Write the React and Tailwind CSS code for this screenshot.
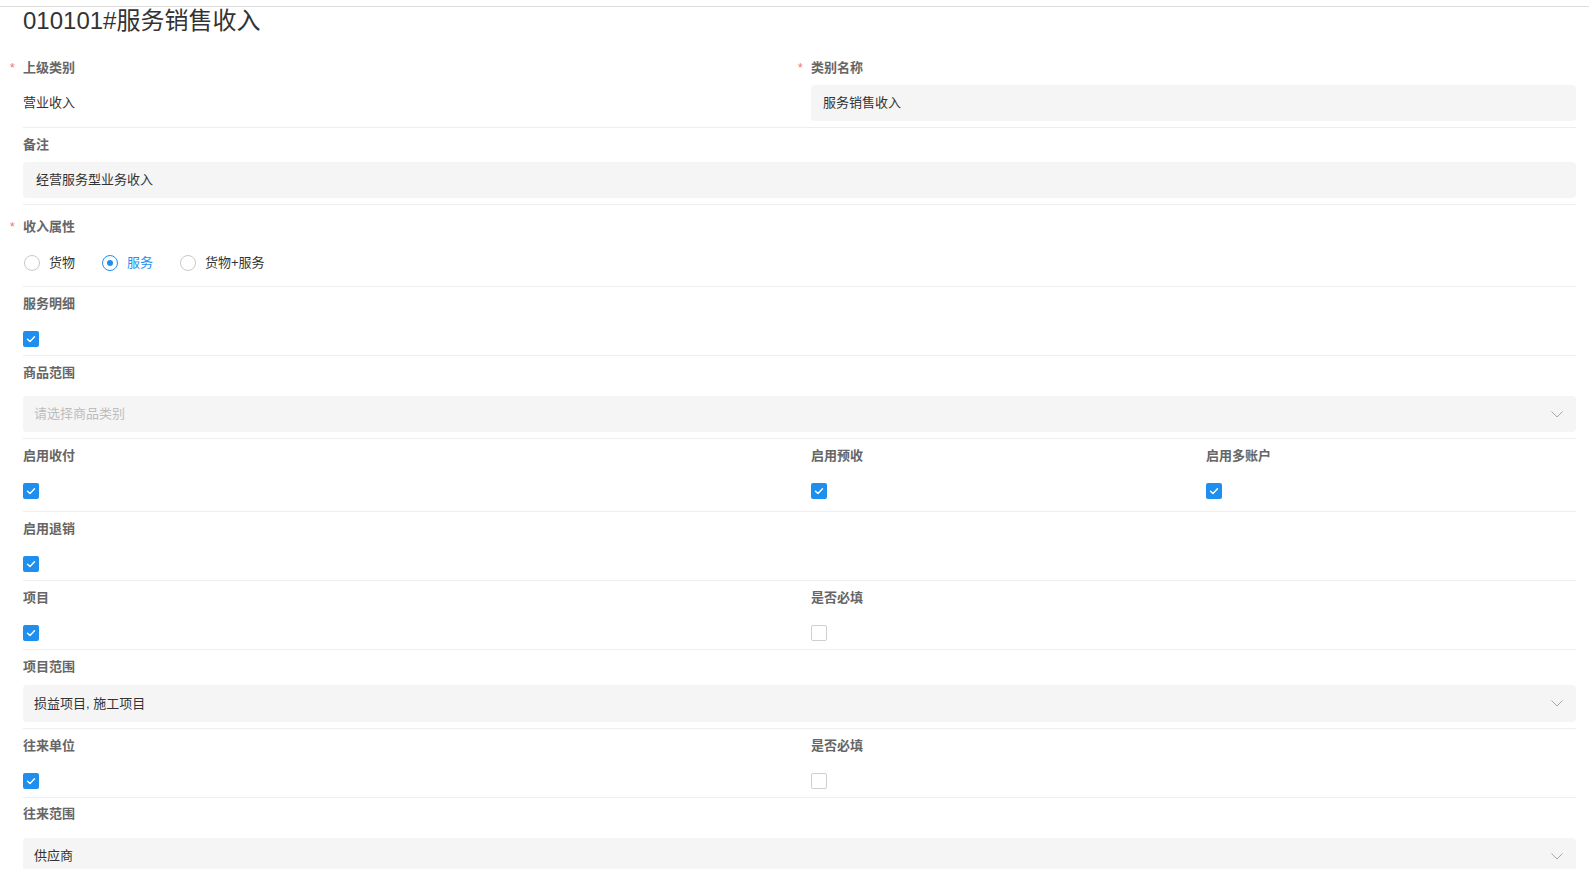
import React from "react";

const BLUE = "bg-[#1e8fef]";

function Label({ text, required }) {
  return (
    <div className="h-[20px] leading-[20px] text-[13px] font-bold text-[#666] whitespace-nowrap">
      {required && (
        <span className="inline-block w-[13px] -ml-[13px] text-[12px] font-normal text-[#f56c6c] align-top">*</span>
      )}
      {text}
    </div>
  );
}

function Check({ checked }) {
  if (checked) {
    return (
      <div className={`w-4 h-4 rounded-[2px] ${BLUE} flex items-center justify-center`}>
        <svg width="12" height="12" viewBox="0 0 12 12" fill="none">
          <polyline points="2.5,6.2 5,8.5 9.5,3.8" stroke="white" strokeWidth="1.4" strokeLinecap="round" strokeLinejoin="round" />
        </svg>
      </div>
    );
  }
  return <div className="w-4 h-4 rounded-[2px] border border-[#cfcfcf] bg-white" />;
}

function CheckField({ label, checked, gap = "mt-[9px]" }) {
  return (
    <div className="flex flex-col">
      <Label text={label} />
      <div className={`${gap} h-[32px] flex items-center`}>
        <Check checked={checked} />
      </div>
    </div>
  );
}

function Chevron() {
  return (
    <svg width="12" height="7" viewBox="0 0 12 7" fill="none">
      <polyline points="0.5,0.5 6,6 11.5,0.5" stroke="#a8a8a8" strokeWidth="1" />
    </svg>
  );
}

function Select({ value, placeholder, h = "h-[36px]" }) {
  return (
    <div className={`${h} rounded-[4px] bg-[#f5f5f5] pl-[11px] pr-[13px] flex items-center justify-between text-[13px]`}>
      {value ? <span className="text-[#333]">{value}</span> : <span className="text-[#bdbdbd]">{placeholder}</span>}
      <Chevron />
    </div>
  );
}

function Radio({ label, checked }) {
  return (
    <div className="flex items-center gap-[9px]">
      {checked ? (
        <div className="w-4 h-4 rounded-full border border-[#1e8fef] flex items-center justify-center">
          <div className="w-[6px] h-[6px] rounded-full bg-[#1e8fef]" />
        </div>
      ) : (
        <div className="w-4 h-4 rounded-full border border-[#c8c8c8] bg-white" />
      )}
      <span className={`text-[13px] ${checked ? "text-[#1e8fef]" : "text-[#333]"}`}>{label}</span>
    </div>
  );
}

const row = "grid grid-cols-[788px_395px_1fr] border-b border-[#eeeeee]";

export default function App() {
  return (
    <div className="min-h-screen bg-white pt-[6px] font-['Liberation_Sans','Noto_Sans_CJK_SC',sans-serif]">
      <div className="border-t border-[#dcdcdc] pl-[23px] pr-[13px]">
        <h1 className="h-[28px] leading-[27px] text-[24px] text-[#333] font-normal">010101#服务销售收入</h1>

        {/* Row 1 */}
        <div className={`${row} pt-[23px] pb-[6px]`}>
          <div className="flex flex-col">
            <Label text="上级类别" required />
            <div className="mt-[7px] h-[36px] flex items-center text-[13px] text-[#333]">营业收入</div>
          </div>
          <div className="col-span-2 flex flex-col">
            <Label text="类别名称" required />
            <div className="mt-[7px] h-[36px] rounded-[4px] bg-[#f5f5f5] pl-[12px] flex items-center text-[13px] text-[#333]">服务销售收入</div>
          </div>
        </div>

        {/* Row 2 */}
        <div className={`${row} pt-[7px] pb-[6px]`}>
          <div className="col-span-3 flex flex-col">
            <Label text="备注" />
            <div className="mt-[7px] h-[36px] rounded-[4px] bg-[#f5f5f5] pl-[13px] flex items-center text-[13px] text-[#333]">经营服务型业务收入</div>
          </div>
        </div>

        {/* Row 3 */}
        <div className={`${row} pt-[12px] pb-[7px]`}>
          <div className="col-span-3 flex flex-col">
            <Label text="收入属性" required />
            <div className="mt-[10px] h-[32px] flex items-center gap-[27px] pl-[1px]">
              <Radio label="货物" />
              <Radio label="服务" checked />
              <Radio label="货物+服务" />
            </div>
          </div>
        </div>

        {/* Row 4 */}
        <div className={`${row} pt-[7px]`}>
          <CheckField label="服务明细" checked />
        </div>

        {/* Row 5 */}
        <div className={`${row} pt-[7px] pb-[6px]`}>
          <div className="col-span-3 flex flex-col">
            <Label text="商品范围" />
            <div className="mt-[13px]">
              <Select placeholder="请选择商品类别" />
            </div>
          </div>
        </div>

        {/* Row 6 */}
        <div className={`${row} pt-[7px] pb-[4px]`}>
          <CheckField label="启用收付" checked />
          <CheckField label="启用预收" checked />
          <CheckField label="启用多账户" checked />
        </div>

        {/* Row 7 */}
        <div className={`${row} pt-[7px]`}>
          <CheckField label="启用退销" checked />
        </div>

        {/* Row 8 */}
        <div className={`${row} pt-[7px]`}>
          <CheckField label="项目" checked />
          <CheckField label="是否必填" />
        </div>

        {/* Row 9 */}
        <div className={`${row} pt-[7px] pb-[6px]`}>
          <div className="col-span-3 flex flex-col">
            <Label text="项目范围" />
            <div className="mt-[8px]">
              <Select value="损益项目, 施工项目" h="h-[37px]" />
            </div>
          </div>
        </div>

        {/* Row 10 */}
        <div className={`${row} pt-[7px]`}>
          <CheckField label="往来单位" checked />
          <CheckField label="是否必填" />
        </div>

        {/* Row 11 */}
        <div className={`${row} pt-[6px] pb-[6px]`}>
          <div className="col-span-3 flex flex-col">
            <Label text="往来范围" />
            <div className="mt-[14px]">
              <Select value="供应商" />
            </div>
          </div>
        </div>
      </div>
    </div>
  );
}
